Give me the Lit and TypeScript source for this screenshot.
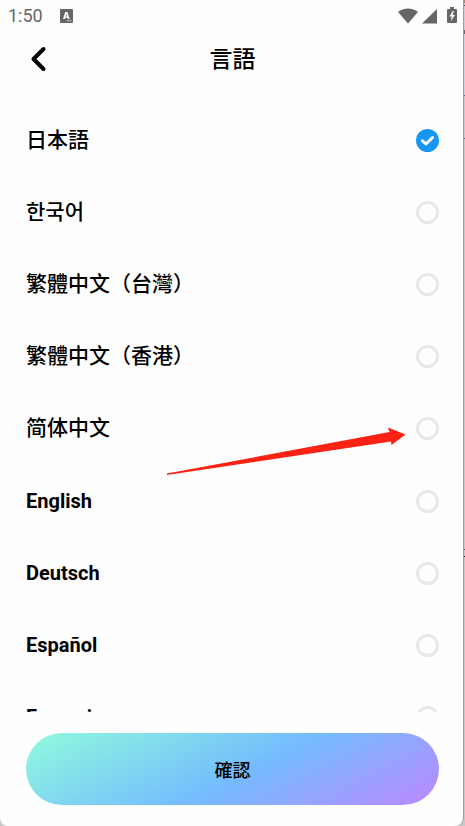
import { LitElement, html, css, svg, nothing } from "lit";
import { customElement, property, state } from "lit/decorators.js";
import { classMap } from "lit/directives/class-map.js";

interface Language {
  code: string;
  name: string;
  latin?: boolean;
}

const ASIAN: Language[] = [
  { code: "ja", name: "日本語" },
  { code: "ko", name: "한국어" },
  { code: "zh-TW", name: "繁體中文（台灣）" },
  { code: "zh-HK", name: "繁體中文（香港）" },
  { code: "zh-CN", name: "简体中文" },
];

const EUROPEAN: Language[] = [
  { code: "en", name: "English", latin: true },
  { code: "de", name: "Deutsch", latin: true },
  { code: "es", name: "Español", latin: true },
  { code: "fr", name: "Français", latin: true },
];

@customElement("status-bar")
class StatusBar extends LitElement {
  static styles = css`
    :host {
      display: flex;
      align-items: center;
      height: 32px;
      padding: 0 6px 0 8px;
      color: #666;
      font-size: 18px;
      line-height: 32px;
    }
    svg {
      display: block;
      fill: currentColor;
    }
    .app {
      margin-left: 17px;
    }
    .system {
      display: flex;
      align-items: center;
      margin-left: auto;
    }
    .signal {
      margin: 0 10px 0 4px;
    }
    .mark {
      fill: #fff;
    }
  `;

  render() {
    return html`
      <span>1:50</span>
      <svg class="app" width="13" height="14" viewBox="0 0 13 14" aria-hidden="true">
        <rect width="13" height="14" rx="1" />
        <path class="mark" fill-rule="evenodd" d="M5.200 3h2.200l2.200 7H7.800l-.4-1.300H5.200L4.800 10H3zM6.300 5l-.7 2.400H7z" />
        <path class="mark" d="M6.800 11.200h1v1h-1zM8.500 11.200h1v1h-1zM10.200 11.200h1v1h-1z" />
      </svg>
      <div class="system">
        <svg width="20" height="16" viewBox="0 0 20 16" aria-hidden="true">
          <path d="M0 4C5.500-.8 14.500-.8 20 4L10 15.500z" />
        </svg>
        <svg class="signal" width="15" height="16" viewBox="0 0 15 16" aria-hidden="true">
          <path d="M15 1v14.500H0z" />
        </svg>
        <svg width="10" height="18" viewBox="0 0 10 18" aria-hidden="true">
          <path d="M3 0h4v2h2q1 0 1 1v12q0 1-1 1H1q-1 0-1-1V3q0-1 1-1h2z" />
          <path class="mark" d="M5.800 4 2.400 9.500h2.200l-.6 4.500L7.900 8H5.500l1.400-4z" />
        </svg>
      </div>
    `;
  }
}

@customElement("language-option")
class LanguageOption extends LitElement {
  @property({ attribute: false }) language!: Language;
  @property({ type: Boolean }) selected = false;

  static styles = css`
    :host {
      display: block;
    }
    .row {
      display: flex;
      align-items: center;
      justify-content: space-between;
      height: 72px;
      padding: 0 24px 0 26px;
      cursor: pointer;
    }
    .name {
      font-size: 21px;
      line-height: 32px;
      font-weight: 500;
    }
    .latin {
      font-size: 20px;
      font-weight: 700;
    }
    .control {
      display: grid;
    }
    input,
    svg {
      grid-area: 1 / 1;
      width: 23px;
      height: 23px;
    }
    input {
      appearance: none;
      box-sizing: border-box;
      margin: 0;
      border: 3px solid #e8e8e8;
      border-radius: 50%;
    }
    input:checked {
      border: none;
      background: #1597f3;
    }
    svg {
      pointer-events: none;
      fill: none;
      stroke: #fff;
      stroke-width: 3;
      stroke-linecap: round;
      stroke-linejoin: round;
    }
  `;

  private pick() {
    this.dispatchEvent(new CustomEvent("pick", { detail: this.language.code }));
  }

  render() {
    const { code, name, latin = false } = this.language;
    return html`
      <label class="row">
        <span class=${classMap({ name: true, latin })} lang=${code}>${name}</span>
        <span class="control">
          <input type="radio" name="language" .checked=${this.selected} @change=${this.pick} />
          ${this.selected
            ? html`<svg viewBox="0 0 23 23" aria-hidden="true">${svg`<path d="M6.500 11.800 10 15l6.500-6.500" />`}</svg>`
            : nothing}
        </span>
      </label>
    `;
  }
}

@customElement("app-root")
class AppRoot extends LitElement {
  @state() private selected = "ja";

  static styles = css`
    :host {
      display: block;
      padding-right: 2px;
      background: linear-gradient(
        #a88a70 0 3px,
        #c8c8cc 3px 5px,
        #555 5px 6px,
        #cdced6 6px 30px,
        #6a6a70 30px 34px,
        #cdd2e0 34px 95px,
        #5a68a0 95px 96px,
        #cbcbcf 96px 138px,
        #5a68a0 138px 139px,
        #c8c8c8 139px 549px,
        #56607c 549px 550px,
        #c8c8c8 550px 556px,
        #22243c 556px 557px,
        #c8c8c8 557px
      );
      color: #000;
      font-family: Roboto, "Noto Sans CJK JP", "Noto Sans CJK KR", sans-serif;
    }
    .screen {
      display: flex;
      flex-direction: column;
      height: 100vh;
      background: #fefefe;
      border-radius: 0 0 8px 8px;
      box-shadow: 1px 0 0 #a0a0a4;
    }
    header {
      display: grid;
      grid-template-columns: 48px 1fr 48px;
      align-items: center;
      height: 56px;
      padding: 0 12px 0 14px;
    }
    .back {
      display: grid;
      place-items: center;
      width: 48px;
      height: 48px;
      padding: 0;
      border: none;
      background: none;
      color: #000;
    }
    .back svg {
      fill: none;
      stroke: currentColor;
      stroke-width: 4;
      stroke-linecap: round;
      stroke-linejoin: round;
    }
    h1 {
      margin: 0;
      text-align: center;
      font-size: 23px;
      line-height: 32px;
      font-weight: 500;
    }
    .list {
      display: flex;
      flex-direction: column;
      gap: 1px;
      flex: 1;
      min-height: 0;
      margin-top: 16px;
      overflow-y: auto;
      scrollbar-width: none;
    }
    .target {
      position: relative;
    }
    .arrow {
      position: absolute;
      right: 57px;
      top: 35px;
      fill: #fc2314;
      pointer-events: none;
      z-index: 1;
    }
    footer {
      padding: 21px 24px 21px 26px;
    }
    .confirm {
      display: block;
      width: 100%;
      height: 72px;
      border: none;
      border-radius: 36px;
      background: linear-gradient(152deg, #90fbdc, #74bbff 54%, #bd88ff);
      color: #000;
      font: inherit;
      font-size: 18px;
      font-weight: 500;
    }
  `;

  private option(language: Language) {
    return html`
      <language-option
        .language=${language}
        ?selected=${language.code === this.selected}
        @pick=${(e: CustomEvent<string>) => (this.selected = e.detail)}
      ></language-option>
    `;
  }

  render() {
    return html`
      <main class="screen" lang="ja">
        <status-bar></status-bar>
        <header>
          <button class="back" aria-label="戻る">
            <svg width="17" height="28" viewBox="0 0 17 28" aria-hidden="true">
              <path d="M13.500 3 3.500 13l10 10" />
            </svg>
          </button>
          <h1>言語</h1>
        </header>
        <div class="list" role="radiogroup" aria-label="言語">
          <div>
            ${ASIAN.map((language) =>
              language.code === "zh-CN"
                ? html`<div class="target">
                    ${this.option(language)}
                    <svg class="arrow" width="240" height="50" viewBox="0 0 240 50" aria-hidden="true">
                      <path d="M1 46.500 223.500 5l-1.500-4.500L239.500 7.500 225.500 18l-.5-3.500L1 48z" />
                    </svg>
                  </div>`
                : this.option(language)
            )}
          </div>
          <div>${EUROPEAN.map((language) => this.option(language))}</div>
        </div>
        <footer>
          <button class="confirm">確認</button>
        </footer>
      </main>
    `;
  }
}
